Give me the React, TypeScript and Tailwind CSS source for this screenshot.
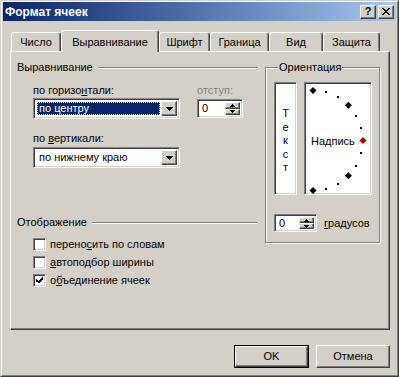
import React from "react";

const raised =
  "border border-t-white border-l-white border-r-[#404040] border-b-[#404040] shadow-[inset_-1px_-1px_0_#808080]";
const sunken =
  "border border-t-[#808080] border-l-[#808080] border-r-white border-b-white shadow-[inset_1px_1px_0_#404040,inset_-1px_-1px_0_#d4d0c8]";

function DownTri() {
  return (
    <svg width="7" height="4" viewBox="0 0 7 4" shapeRendering="crispEdges">
      <rect x="0" y="0" width="7" height="1" fill="#000" />
      <rect x="1" y="1" width="5" height="1" fill="#000" />
      <rect x="2" y="2" width="3" height="1" fill="#000" />
      <rect x="3" y="3" width="1" height="1" fill="#000" />
    </svg>
  );
}

function SmallTri({ up }: { up?: boolean }) {
  return (
    <svg width="5" height="3" viewBox="0 0 5 3" shapeRendering="crispEdges" className={up ? "rotate-180" : ""}>
      <rect x="0" y="0" width="5" height="1" fill="#000" />
      <rect x="1" y="1" width="3" height="1" fill="#000" />
      <rect x="2" y="2" width="1" height="1" fill="#000" />
    </svg>
  );
}

function Combo({ text, selected }: { text: string; selected?: boolean }) {
  return (
    <div className={`w-[147px] h-[21px] bg-white flex items-stretch p-[2px] ${sunken}`}>
      <div className="flex-1 p-[1px] flex">
        {selected ? (
          <div className="flex-1 bg-[#0a246a] text-white border border-dotted border-[#e8e890] flex items-center pl-[1px] leading-[13px]">
            {text}
          </div>
        ) : (
          <div className="flex-1 flex items-center pl-[2px] leading-[13px]">{text}</div>
        )}
      </div>
      <div className={`w-[16px] bg-[#d4d0c8] flex items-center justify-center ${raised}`}>
        <DownTri />
      </div>
    </div>
  );
}

function Spinner({ w, h }: { w: string; h: string }) {
  return (
    <div className={`${w} ${h} bg-white flex items-stretch p-[2px] ${sunken}`}>
      <div className="flex-1 flex items-center pl-[2px] leading-[13px]">0</div>
      <div className="w-[15px] flex flex-col">
        <div className={`flex-1 bg-[#d4d0c8] flex items-center justify-center ${raised}`}>
          <SmallTri up />
        </div>
        <div className={`flex-1 bg-[#d4d0c8] flex items-center justify-center ${raised}`}>
          <SmallTri />
        </div>
      </div>
    </div>
  );
}

function Check({ checked, children }: { checked?: boolean; children: React.ReactNode }) {
  return (
    <div className="flex items-center gap-[4px] h-[13px]">
      <div className={`w-[13px] h-[13px] bg-white flex items-center justify-center ${sunken}`}>
        {checked && (
          <svg width="7" height="7" viewBox="0 0 7 7" shapeRendering="crispEdges">
            <path d="M6 0h1v3H6zM5 1h1v3H5zM4 2h1v3H4zM3 3h1v3H3zM2 4h1v2H2zM1 3h1v2H1zM0 2h1v3H0z" fill="#000" />
          </svg>
        )}
      </div>
      <span className="leading-[13px]">{children}</span>
    </div>
  );
}

function GroupHeader({ text }: { text: string }) {
  return (
    <div className="flex items-center h-[13px]">
      <span className="leading-[13px]">{text}</span>
      <div className="flex-1 ml-[5px] h-[2px] border-t border-t-[#808080] border-b border-b-white" />
    </div>
  );
}

function Tab({ label, w, active }: { label: string; w: string; active?: boolean }) {
  return (
    <div
      className={`${w} ${
        active ? "h-[22px] -mb-px relative z-10 pt-[2px]" : "h-[19px] pt-[1px]"
      } bg-[#d4d0c8] rounded-t-[3px] border-t border-l border-t-white border-l-white border-r border-r-[#404040] shadow-[inset_-1px_0_0_#808080] flex items-center justify-center leading-[13px]`}
    >
      {label}
    </div>
  );
}

function Orientation() {
  const cx = 6;
  const cy = 55.5;
  const r = 50;
  const items: React.ReactNode[] = [];
  for (let a = -90; a <= 90; a += 15) {
    const rad = (a * Math.PI) / 180;
    const x = cx + r * Math.cos(rad);
    const y = cy + r * Math.sin(rad);
    if (a % 45 === 0) {
      const color = a === 0 ? "#c00000" : "#000";
      items.push(
        <polygon
          key={a}
          points={`${x},${y - 3.5} ${x + 3.5},${y} ${x},${y + 3.5} ${x - 3.5},${y}`}
          fill={color}
        />
      );
    } else {
      items.push(<rect key={a} x={Math.round(x) - 1} y={Math.round(y) - 1} width="2" height="2" fill="#000" />);
    }
  }
  return (
    <svg className="absolute inset-0" width="64" height="109" viewBox="0 0 64 109">
      {items}
    </svg>
  );
}

export default function App() {
  return (
    <div className="w-[399px] h-[377px] bg-[#d4d0c8] font-['Liberation_Sans',Arial,sans-serif] text-[11px] text-black border border-t-[#d4d0c8] border-l-[#d4d0c8] border-r-[#404040] border-b-[#404040] select-none">
      <div className="w-full h-full border border-t-white border-l-white border-r-[#808080] border-b-[#808080] px-[1px] pb-[1px] flex flex-col">
        {/* title bar */}
        <div className="h-[19px] bg-linear-to-r from-[#0a246a] to-[#a6caf0] flex items-center pl-[2px] pr-[2px]">
          <span className="text-white font-bold text-[12px] leading-[14px] flex-1">Формат ячеек</span>
          <div className="flex gap-[2px]">
            <div className={`w-[16px] h-[14px] bg-[#d4d0c8] flex items-center justify-center font-bold text-[11px] leading-[11px] ${raised}`}>
              ?
            </div>
            <div className={`w-[16px] h-[14px] bg-[#d4d0c8] flex items-center justify-center ${raised}`}>
              <svg width="8" height="7" viewBox="0 0 8 7" shapeRendering="crispEdges">
                <path d="M0 0h2v1H0zM6 0h2v1H6zM1 1h2v1H1zM5 1h2v1H5zM2 2h4v1H2zM3 3h2v1H3zM2 4h4v1H2zM1 5h2v1H1zM5 5h2v1H5zM0 6h2v1H0zM6 6h2v1H6z" fill="#000" />
              </svg>
            </div>
          </div>
        </div>

        {/* tabs */}
        <div className="flex items-end h-[21px] mt-[9px] pl-[8px]">
          <Tab label="Число" w="w-[50px]" />
          <Tab label="Выравнивание" w="w-[98px]" active />
          <Tab label="Шрифт" w="w-[51px]" />
          <Tab label="Граница" w="w-[59px]" />
          <Tab label="Вид" w="w-[54px]" />
          <Tab label="Защита" w="w-[57px]" />
        </div>

        {/* panel */}
        <div className="ml-[7px] w-[380px] h-[279px] border border-t-white border-l-white border-r-[#404040] border-b-[#404040] shadow-[inset_-1px_-1px_0_#808080] flex pt-[9px] pl-[6px]">
          {/* left column */}
          <div className="w-[240px] flex flex-col">
            <GroupHeader text="Выравнивание" />
            <div className="pl-[16px] flex flex-col">
              <div className="flex gap-[17px] mt-[10px]">
                <div className="flex flex-col">
                  <span className="leading-[13px]">
                    по горизо<u>н</u>тали:
                  </span>
                  <div className="mt-[1px]">
                    <Combo text="по центру" selected />
                  </div>
                </div>
                <div className="flex flex-col">
                  <span className="leading-[13px] text-[#808080]">отступ:</span>
                  <div className="mt-[2px]">
                    <Spinner w="w-[46px]" h="h-[19px]" />
                  </div>
                </div>
              </div>
              <span className="leading-[13px] mt-[13px]">
                по <u>в</u>ертикали:
              </span>
              <div className="mt-[2px]">
                <Combo text="по нижнему краю" />
              </div>
            </div>
            <div className="mt-[48px]">
              <GroupHeader text="Отображение" />
            </div>
            <div className="pl-[16px] mt-[9px] flex flex-col gap-[5px]">
              <Check>
                перено<u>с</u>ить по словам
              </Check>
              <Check>
                <u>а</u>втоподбор ширины
              </Check>
              <Check checked>
                о<u>б</u>ъединение ячеек
              </Check>
            </div>
          </div>

          {/* orientation */}
          <fieldset className="ml-[8px] w-[115px] h-[182px] border border-[#808080] shadow-[inset_1px_1px_0_#fff,1px_1px_0_#fff] pl-[8px] pt-[8px] m-0 min-w-0">
            <legend className="ml-[4px] px-[1px] leading-[13px] bg-[#d4d0c8]">Ориентация</legend>
            <div className="flex gap-[7px]">
              <div className={`w-[23px] h-[113px] bg-white flex flex-col items-center justify-center pt-[5px] ${sunken}`}>
                {["Т", "е", "к", "с", "т"].map((c, i) => (
                  <span key={i} className="leading-[13.5px]">
                    {c}
                  </span>
                ))}
              </div>
              <div className={`w-[68px] h-[113px] bg-white p-[2px] ${sunken}`}>
                <div className="relative w-full h-full flex items-center pl-[4px] pt-[5px]">
                  <Orientation />
                  <span className="relative leading-[13px]">Надпись</span>
                </div>
              </div>
            </div>
            <div className="flex items-center gap-[7px] mt-[19px]">
              <Spinner w="w-[43px]" h="h-[18px]" />
              <span className="leading-[13px]">
                <u>г</u>радусов
              </span>
            </div>
          </fieldset>
        </div>

        {/* buttons */}
        <div className="flex justify-end gap-[7px] mt-[15px] pr-[6px]">
          <div className="w-[75px] h-[23px] border border-black">
            <div className={`w-full h-full bg-[#d4d0c8] flex items-center justify-center leading-[13px] ${raised}`}>OK</div>
          </div>
          <div className={`w-[74px] h-[23px] bg-[#d4d0c8] flex items-center justify-center leading-[13px] ${raised}`}>
            Отмена
          </div>
        </div>
      </div>
    </div>
  );
}
